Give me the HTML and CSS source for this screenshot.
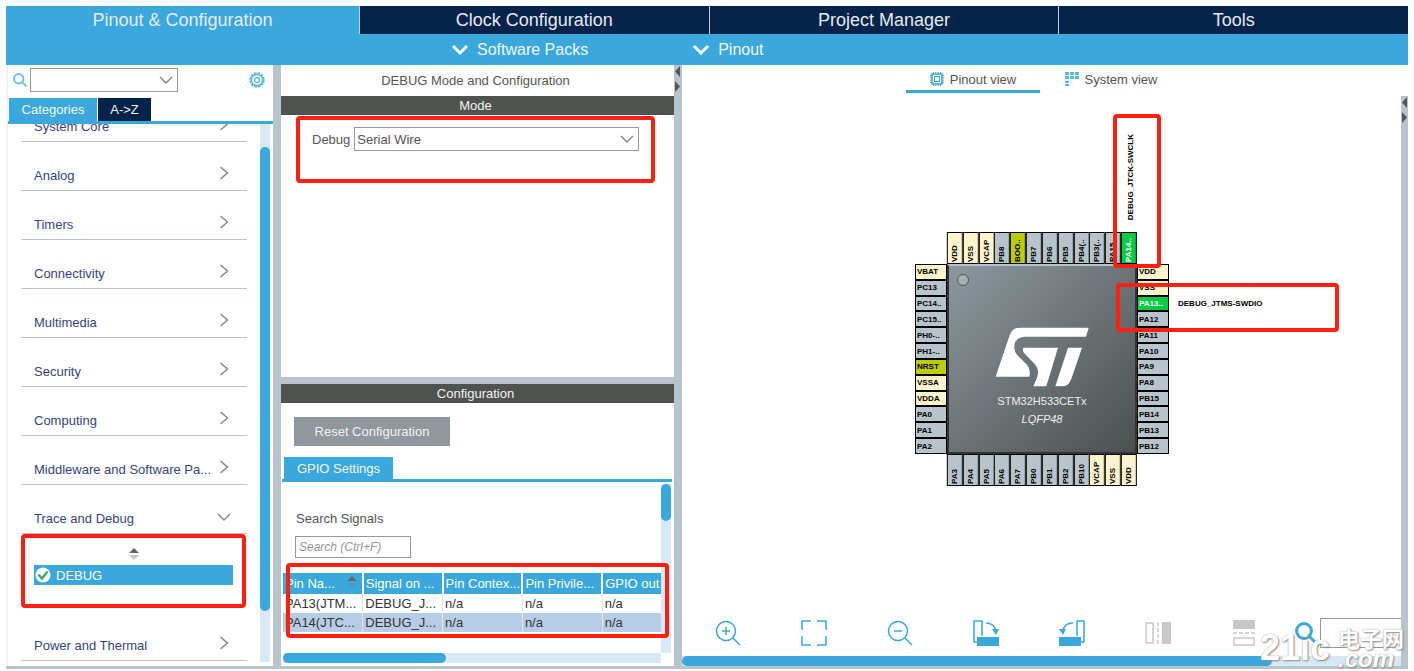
FILE: index.html
```html
<!DOCTYPE html>
<html lang="en">
<head>
    <meta charset="UTF-8">
    <meta name="viewport" content="width=device-width, initial-scale=1.0">
    <title>Pinout &amp; Configuration</title>
    <link rel="stylesheet" href="styles.css">
</head>
<body>
    <!-- shared icons -->
    <svg class="sprite" aria-hidden="true">
        <symbol id="right" viewBox="0 0 10 14"><path d="M1.5 1l7 6-7 6" fill="none" stroke="#858585" stroke-width="1.4"/></symbol>
        <symbol id="down" viewBox="0 0 14 8"><path d="M1 1l6 6 6-6" fill="none" stroke="#858585" stroke-width="1.4"/></symbol>
        <symbol id="search" viewBox="0 0 22 22"><circle cx="9" cy="9" r="7.4" fill="none" stroke="currentColor" stroke-width="3"/><path d="M14 14l7 7" stroke="currentColor" stroke-width="3"/></symbol>
        <symbol id="split" viewBox="0 0 7 30"><path d="M6 1v11L1 6.500z M1 16v11l5-5.500z" fill="#555"/></symbol>
    </svg>

    <div class="app">
        <nav class="main-tabs">
            <button class="active">Pinout &amp; Configuration</button>
            <button>Clock Configuration</button>
            <button>Project Manager</button>
            <button>Tools</button>
        </nav>
        <div class="sub-bar">
            <button><svg width="18" height="12" viewBox="0 0 18 12"><path d="M2 2l7 7 7-7" fill="none" stroke="#fff" stroke-width="3"/></svg>Software Packs</button>
            <button><svg width="18" height="12" viewBox="0 0 18 12"><path d="M2 2l7 7 7-7" fill="none" stroke="#fff" stroke-width="3"/></svg>Pinout</button>
        </div>

        <div class="workspace">
            <aside class="sidebar">
                <div class="side-search">
                    <svg class="pale" width="14" height="14"><use href="#search"/></svg>
                    <div class="select">
                        <select aria-label="Search peripherals"><option></option></select>
                        <svg width="14" height="8"><use href="#down"/></svg>
                    </div>
                    <button class="gear" aria-label="Settings">
                        <svg width="16" height="16" viewBox="0 0 16 16" fill="none" stroke="#5cb6e1">
                            <circle cx="8" cy="8" r="6.800" stroke-width="1.800" stroke-dasharray="2.600 1"/>
                            <circle cx="8" cy="8" r="5.600" stroke-width="1.500"/>
                            <circle cx="8" cy="8" r="2.500" stroke-width="1.300"/>
                        </svg>
                    </button>
                </div>
                <div class="side-tabs">
                    <button class="active">Categories</button>
                    <button>A-&gt;Z</button>
                </div>
                <div class="side-body">
                    <ul class="categories">
                        <li><span>System Core</span><svg width="10" height="14"><use href="#right"/></svg></li>
                        <li><span>Analog</span><svg width="10" height="14"><use href="#right"/></svg></li>
                        <li><span>Timers</span><svg width="10" height="14"><use href="#right"/></svg></li>
                        <li><span>Connectivity</span><svg width="10" height="14"><use href="#right"/></svg></li>
                        <li><span>Multimedia</span><svg width="10" height="14"><use href="#right"/></svg></li>
                        <li><span>Security</span><svg width="10" height="14"><use href="#right"/></svg></li>
                        <li><span>Computing</span><svg width="10" height="14"><use href="#right"/></svg></li>
                        <li><span>Middleware and Software Pa...</span><svg width="10" height="14"><use href="#right"/></svg></li>
                        <li class="open"><span>Trace and Debug</span><svg width="14" height="8"><use href="#down"/></svg></li>
                        <li class="group">
                            <svg width="10" height="12" viewBox="0 0 10 12"><path d="M0 5l5-5 5 5z" fill="#666"/><path d="M0 7h10l-5 5z" fill="#c8c8c8"/></svg>
                            <button>
                                <svg width="16" height="16" viewBox="0 0 16 16"><circle cx="8" cy="8" r="7.500" fill="#fff"/><path d="M3.500 7.500l3.500 4 5.500-7" fill="none" stroke="#3cab6c" stroke-width="2.400"/></svg>
                                DEBUG
                            </button>
                            <i class="mark mark-debug"></i>
                        </li>
                        <li><span>Power and Thermal</span><svg width="10" height="14"><use href="#right"/></svg></li>
                    </ul>
                    <div class="side-scroll"><i></i></div>
                </div>
            </aside>

            <div class="divider"></div>

            <section class="config">
                <h2>DEBUG Mode and Configuration</h2>
                <h3>Mode</h3>
                <div class="mode">
                    <div class="field">
                        <label for="debug">Debug</label>
                        <div class="select">
                            <select id="debug"><option>Serial Wire</option></select>
                            <svg width="14" height="8"><use href="#down"/></svg>
                        </div>
                    </div>
                    <i class="mark mark-mode"></i>
                </div>
                <h3 class="lower">Configuration</h3>
                <div class="settings">
                    <button class="reset">Reset Configuration</button>
                    <div class="gpio-tabs"><button>GPIO Settings</button></div>
                    <div class="gpio">
                        <div class="gpio-view">
                            <label for="signals">Search Signals</label>
                            <input id="signals" type="text" placeholder="Search (Ctrl+F)">
                            <table>
                                <thead>
                                    <tr>
                                        <th>Pin Na... <svg width="10" height="12" viewBox="0 0 10 12"><path d="M0 5l5-5 5 5z" fill="#666"/><path d="M0 7h10l-5 5z" fill="#5992b4"/></svg></th>
                                        <th>Signal on ...</th>
                                        <th>Pin Contex...</th>
                                        <th>Pin Privile...</th>
                                        <th>GPIO out</th>
                                    </tr>
                                </thead>
                                <tbody>
                                    <tr><td>PA13(JTM...</td><td>DEBUG_J...</td><td>n/a</td><td>n/a</td><td>n/a</td></tr>
                                    <tr class="selected"><td>PA14(JTC...</td><td>DEBUG_J...</td><td>n/a</td><td>n/a</td><td>n/a</td></tr>
                                </tbody>
                            </table>
                        </div>
                        <div class="gpio-v"><i></i></div>
                        <div class="gpio-h"><i></i></div>
                        <i class="mark mark-table"></i>
                    </div>
                </div>
            </section>

            <div class="divider"><svg width="7" height="30"><use href="#split"/></svg></div>

            <main class="pinout">
                <div class="view-tabs">
                    <button class="active">
                        <svg width="14" height="14" viewBox="0 0 14 14" fill="none" stroke="#3aa8dc"><path d="M3.500 0v14M5.800 0v14M8.200 0v14M10.500 0v14M0 3.500h14M0 5.800h14M0 8.200h14M0 10.500h14" stroke-width="1"/><rect x="2" y="2" width="10" height="10" fill="#fff" stroke-width="1.500"/><rect x="4.500" y="4.500" width="5" height="5"/></svg>
                        Pinout view
                    </button>
                    <button>
                        <svg width="14" height="14" viewBox="0 0 14 14" fill="#5cb6e1"><path d="M0 0h4v3H0zM5 0h4v3H5zM10 0h4v3h-4zM0 4h4v3H0zM5 4h4v3H5zM10 4h4v3h-4zM0 9h4v2H0zM0 12h4v2H0z"/></svg>
                        System view
                    </button>
                </div>
                <div class="view">
                    <div class="canvas">
                        <div class="chip">
                            <ul class="pins top">
                                <li class="power">VDD</li><li class="power">VSS</li><li class="power">VCAP</li><li>PB8</li><li class="boot">BOO..</li><li>PB7</li><li>PB6</li><li>PB5</li><li>PB4(..</li><li>PB3(..</li><li>PA15</li><li class="used">PA14..</li>
                            </ul>
                            <ul class="pins left">
                                <li class="power">VBAT</li><li>PC13</li><li>PC14..</li><li>PC15..</li><li>PH0-..</li><li>PH1-..</li><li class="boot">NRST</li><li class="power">VSSA</li><li class="power">VDDA</li><li>PA0</li><li>PA1</li><li>PA2</li>
                            </ul>
                            <div class="die">
                                <svg width="95" height="62" viewBox="30 50 285 186" fill="#fff"><path d="M32 202L74 78Q82 55 106 55H311L303 82H118Q91 84 88 108Q86 126 99 139L127 168Q138 180 133 202Z"/><path d="M115 115H219L184 231H145L157 202Q164 181 149 164L120 134Q111 125 115 115Z"/><path d="M249 115H291L258 211Q250 231 231 231H211Z"/></svg>
                                <span>STM32H533CETx</span>
                                <em>LQFP48</em>
                            </div>
                            <ul class="pins right">
                                <li class="power">VDD</li><li class="power">VSS</li><li class="used">PA13..</li><li>PA12</li><li>PA11</li><li>PA10</li><li>PA9</li><li>PA8</li><li>PB15</li><li>PB14</li><li>PB13</li><li>PB12</li>
                            </ul>
                            <ul class="pins bottom">
                                <li>PA3</li><li>PA4</li><li>PA5</li><li>PA6</li><li>PA7</li><li>PB0</li><li>PB1</li><li>PB2</li><li>PB10</li><li class="power">VCAP</li><li class="power">VSS</li><li class="power">VDD</li>
                            </ul>
                            <span class="signal swclk">DEBUG_JTCK-SWCLK</span>
                            <span class="signal swdio">DEBUG_JTMS-SWDIO</span>
                            <i class="mark mark-swclk"></i>
                            <i class="mark mark-swdio"></i>
                        </div>
                    </div>
                    <div class="toolbar">
                        <button aria-label="Zoom in"><svg viewBox="0 0 26 26"><circle cx="11" cy="11" r="9.500"/><path d="M18 18l7 7M11 7v8M7 11h8"/></svg></button>
                        <button aria-label="Best fit"><svg viewBox="0 0 26 26"><path d="M1 10V1h9M16 1h9v9M25 16v9h-9M10 25H1v-9"/></svg></button>
                        <button aria-label="Zoom out"><svg viewBox="0 0 26 26"><circle cx="11" cy="11" r="9.500"/><path d="M18 18l7 7M7 11h8"/></svg></button>
                        <button aria-label="Rotate right"><svg viewBox="0 0 26 26"><path d="M4 22H1V1h8v15M13 3q8 0 10 8"/><path class="fill" d="M4 17h22v9H4zM19 9h7l-3 6z"/></svg></button>
                        <button aria-label="Rotate left"><svg viewBox="0 0 26 26"><path d="M22 22h3V1h-7v15M14 3q-9 0-10 8"/><path class="fill" d="M0 17h22v9H0zM0 9h7l-3 6z"/></svg></button>
                        <button class="off" aria-label="Flip horizontally"><svg viewBox="0 0 26 26"><path d="M1 3h7v20H1z"/><path d="M13 2v23" stroke-dasharray="4 2"/><path class="fill" d="M17 2h9v22h-9z"/></svg></button>
                        <button class="off" aria-label="Flip vertically"><svg viewBox="0 0 26 26"><path class="fill" d="M2 0h22v9H2z"/><path d="M2 13h23" stroke-dasharray="4 2"/><path d="M3 18h20v7H3z"/></svg></button>
                        <div class="find">
                            <svg class="blue" width="22" height="22"><use href="#search"/></svg>
                            <input type="text" aria-label="Find pin">
                        </div>
                    </div>
                    <div class="view-h"><i></i></div>
                    <div class="divider"><svg width="7" height="30"><use href="#split"/></svg></div>
                </div>
            </main>
        </div>

        <div class="watermark">
            <b>21ic</b>
            <div><span>电子网</span><em>.com</em></div>
        </div>
    </div>
</body>
</html>
```
FILE: styles.css
```css
* { box-sizing: border-box; }
body {
    margin: 0;
    height: 100vh;
    padding: 6px 6px 2px;
    background: #fff;
    font-family: "Liberation Sans", "Noto Sans CJK SC", Arial, sans-serif;
    font-size: 13px;
    color: #555;
}
button, input, select { font: inherit; color: inherit; }
button {
    border: none;
    padding: 0;
    background: none;
    cursor: pointer;
}
ul {
    list-style: none;
    margin: 0;
    padding: 0;
}
svg { display: block; flex: none; }
.sprite { position: absolute; width: 0; height: 0; }
.blue { color: #3aa8dc; }
.pale { color: #6fbfe5; }

.app {
    position: relative;
    display: flex;
    flex-direction: column;
    height: 100%;
}

/* top bars */
.main-tabs {
    display: grid;
    grid-template-columns: 353px repeat(3, 1fr);
    height: 28px;
    background: #03234b;
}
.main-tabs button {
    color: #e6eaef;
    font-size: 18px;
    border-left: 1px solid #c5ced6;
}
.main-tabs .active {
    background: #3aa8dc;
    border-left: none;
}
.sub-bar {
    display: flex;
    align-items: center;
    gap: 104px;
    height: 31px;
    padding-left: 445px;
    background: #3aa8dc;
}
.sub-bar button {
    display: flex;
    align-items: center;
    gap: 8px;
    color: #eef7fc;
    font-size: 16px;
}
.workspace {
    flex: 1;
    min-height: 0;
    display: grid;
    grid-template-columns: 267px 8px 393px 8px 1fr;
    border-bottom: 3px solid #b8c4cb;
}
.divider { background: #b8c4cb; }

.select { position: relative; }
.select select {
    appearance: none;
    width: 100%;
    height: 24px;
    padding: 0 2px;
    background: #fff;
    border: 1px solid #939ba1;
    border-radius: 0;
}
.select svg {
    position: absolute;
    right: 5px;
    top: 8px;
    pointer-events: none;
}

/* red frames round the parts to look at */
.mark {
    position: absolute;
    z-index: 2;
    border: 4px solid #ff2012;
    border-radius: 4px;
    pointer-events: none;
}

/* left panel */
.sidebar {
    display: flex;
    flex-direction: column;
    min-height: 0;
    border-left: 2px solid #f0f2f4;
}
.side-search {
    display: flex;
    align-items: center;
    height: 33px;
    padding: 0 8px 4px 5px;
    gap: 3px;
}
.side-search .select { width: 148px; }
.gear { margin-left: auto; }
.side-tabs {
    display: flex;
    gap: 1px;
    height: 26px;
    padding-left: 1px;
    border-bottom: 3px solid #3aa8dc;
}
.side-tabs button {
    width: 53px;
    color: #f2f6f9;
    background: #03234b;
}
.side-tabs .active {
    width: 88px;
    background: #3aa8dc;
}
.side-body {
    flex: 1;
    display: flex;
    min-height: 0;
    padding-bottom: 4px;
}
.categories {
    flex: 1;
    overflow: hidden;
    padding: 0 13px;
}
.categories li {
    display: flex;
    justify-content: space-between;
    align-items: flex-end;
    height: 49px;
    padding: 0 18px 7px 13px;
    color: #39447a;
    border-bottom: 1px solid #b8c4cb;
}
.categories li:first-child { margin-top: -31px; }
.categories svg { margin-bottom: 3px; }
.categories .open svg { margin: 0 -2px 5px 0; }
.categories .group {
    position: relative;
    flex-direction: column;
    justify-content: flex-start;
    align-items: center;
    height: 78px;
    padding: 14px 14px 0 13px;
    border: none;
}
.categories .group svg { margin: 0; }
.group button {
    display: flex;
    align-items: center;
    gap: 5px;
    width: 100%;
    height: 20px;
    margin-top: 5px;
    padding-left: 1px;
    color: #fff;
    background: #3aa8dc;
}
.mark-debug { inset: 0 1px 4px 0; }
.side-scroll {
    width: 10px;
    margin-right: 3px;
    padding-top: 23px;
    background: #d9e8f5;
}
.side-scroll i {
    display: block;
    height: 90%;
    border-radius: 5px;
    background: #3aa8dc;
}

/* middle panel */
.config {
    display: flex;
    flex-direction: column;
    min-height: 0;
}
.config h2, .config h3 {
    margin: 0;
    padding-right: 4px;
    font-size: 13px;
    font-weight: normal;
    text-align: center;
}
.config h2 { line-height: 31px; }
.config h3 {
    flex: none;
    height: 19px;
    line-height: 19px;
    color: #f2f2f2;
    background: #50524f;
}
.config .lower {
    height: 26px;
    border-top: 7px solid #b8c4cb;
}
.mode {
    position: relative;
    flex: 1;
    padding: 12px 35px 0 31px;
}
.field {
    display: flex;
    align-items: center;
    gap: 4px;
}
.field .select { flex: 1; }
.mark-mode {
    top: 1px;
    left: 15px;
    right: 19px;
    height: 67px;
}
.settings {
    display: flex;
    flex-direction: column;
    height: 263px;
    padding: 14px 2px 0 1px;
}
.reset {
    align-self: flex-start;
    width: 156px;
    height: 29px;
    margin: 0 0 11px 12px;
    color: #f2f2f2;
    background: #91989d;
}
.gpio-tabs {
    height: 25px;
    padding-left: 2px;
    border-bottom: 3px solid #3aa8dc;
}
.gpio-tabs button {
    width: 109px;
    height: 22px;
    color: #f2f6f9;
    background: #3aa8dc;
}
.gpio {
    position: relative;
    flex: 1;
    min-height: 0;
    display: grid;
    grid-template: 1fr 10px / 1fr 10px;
    padding: 2px 1px 3px;
}
.gpio-view {
    overflow: hidden;
    padding-top: 27px;
}
.gpio-view label {
    display: block;
    margin-left: 13px;
    line-height: 16px;
}
.gpio-view input {
    display: block;
    width: 116px;
    height: 22px;
    margin: 9px 0 15px 12px;
    padding: 0 3px;
    border: 1px solid #939ba1;
    font-size: 12px;
    font-style: italic;
}
.gpio-view input::placeholder { color: #999; }
.gpio-view table {
    width: 400px;
    table-layout: fixed;
    border-collapse: collapse;
    color: #333;
}
.gpio-view th, .gpio-view td {
    height: 19px;
    padding: 0 2px;
    font-weight: normal;
    text-align: left;
    white-space: nowrap;
    border-right: 1px solid #e2e6ea;
}
.gpio-view th {
    height: 21px;
    color: #fff;
    background: #3aa8dc;
    border-right: 2px solid #fff;
}
.gpio-view th svg {
    float: right;
    margin-right: 3px;
}
.selected { background: #b7cde6; }
.gpio-v, .gpio-h { background: #d9e8f5; }
.gpio-v i, .gpio-h i {
    display: block;
    background: #3aa8dc;
    border-radius: 5px;
}
.gpio-v i { height: 37px; }
.gpio-h i { width: 43%; height: 10px; }
.mark-table { inset: 81px 3px 28px 4px; }

/* right panel */
.pinout {
    display: flex;
    flex-direction: column;
    min-width: 0;
    min-height: 0;
}
.view-tabs {
    display: flex;
    justify-content: center;
    gap: 4px;
    height: 31px;
    padding-right: 6px;
}
.view-tabs button {
    display: flex;
    justify-content: center;
    align-items: center;
    gap: 6px;
    width: 134px;
    height: 28px;
    padding-top: 3px;
    border-bottom: 3px solid transparent;
}
.view-tabs .active { border-color: #3aa8dc; }
.view {
    flex: 1;
    min-height: 0;
    display: grid;
    grid-template: 1fr 38px 10px / 1fr 7px;
}
.view .divider {
    grid-area: 1 / 2 / 4 / 3;
}
.canvas {
    grid-area: 1 / 1;
    display: flex;
    justify-content: center;
    align-items: center;
    padding: 4px 0 0 1px;
}
.chip {
    position: relative;
    display: grid;
    grid-template: 32px 190px 32px / 32px 190px 32px;
    font-size: 8px;
    font-weight: bold;
    color: #000;
}
.pins { display: flex; }
.pins li {
    flex: 1;
    min-width: 0;
    min-height: 0;
    display: flex;
    align-items: center;
    padding-left: 1px;
    overflow: hidden;
    white-space: nowrap;
    background: #b8c4cb;
    border: 1px solid #000;
}
.pins .power { background: #fff4cc; }
.pins .boot { background: #bbcc00; }
.pins .used { background: #03cc44; color: #fff; }
.left, .right { flex-direction: column; }
.top { grid-area: 1 / 2; }
.left { grid-area: 2 / 1; }
.die { grid-area: 2 / 2; }
.right { grid-area: 2 / 3; }
.bottom { grid-area: 3 / 2; }
.top li, .bottom li, .swclk {
    writing-mode: vertical-rl;
    transform: rotate(180deg);
}
.top li, .bottom li {
    justify-content: flex-start;
    padding: 1px 0 0;
}
.die {
    position: relative;
    display: flex;
    flex-direction: column;
    align-items: center;
    padding-top: 60px;
    color: #eee;
    font-size: 11px;
    font-weight: normal;
    line-height: 18px;
    background: linear-gradient(135deg, #8d979e, #4b504f);
    border: 2px solid #333;
    border-top-color: #b8c4cb;
}
.die span { margin-top: 4px; }
.die::before {
    content: "";
    position: absolute;
    left: 8px;
    top: 8px;
    width: 10px;
    height: 10px;
    border: 1px solid #555;
    border-radius: 50%;
    background: #a5b0b7;
}
.signal { position: absolute; white-space: nowrap; }
.swclk { right: 34px; bottom: 266px; }
.swdio { left: 263px; top: 67px; }
.mark-swclk { left: 198px; top: -118px; width: 48px; height: 154px; }
.mark-swdio { left: 201px; top: 51px; width: 223px; height: 49px; }
.toolbar {
    grid-area: 2 / 1;
    display: flex;
    align-items: flex-start;
    gap: 60px;
    min-width: 0;
    padding: 2px 0 0 33px;
}
.toolbar button svg {
    width: 26px;
    height: 26px;
    fill: none;
    stroke: #3aa8dc;
    stroke-width: 1.500;
}
.toolbar .off svg { stroke: #c8c8c8; }
.toolbar .fill { fill: #3aa8dc; stroke: none; }
.toolbar .off .fill { fill: #c8c8c8; }
.find {
    display: flex;
    flex: 1;
    align-items: center;
    gap: 3px;
    min-width: 0;
    margin: -2px 0 0 -22px;
}
.find input {
    flex: 1;
    min-width: 0;
    height: 30px;
    border: 1px solid #939ba1;
    border-right: none;
}
.view-h {
    grid-area: 3 / 1;
    background: #d9e8f5;
}
.view-h i {
    display: block;
    width: 82%;
    height: 10px;
    border-radius: 5px;
    background: #3aa8dc;
}

.watermark {
    position: absolute;
    right: 4px;
    bottom: 2px;
    z-index: 3;
    display: flex;
    align-items: center;
    gap: 8px;
    color: #fff;
    text-shadow: 1px 1px 2px #888, 0 0 1px #999;
    pointer-events: none;
}
.watermark b {
    font-size: 36px;
    line-height: 38px;
}
.watermark div {
    display: flex;
    flex-direction: column;
    font-weight: bold;
}
.watermark span {
    font-size: 22px;
    line-height: 22px;
}
.watermark em {
    font-size: 24px;
    line-height: 16px;
}
```
